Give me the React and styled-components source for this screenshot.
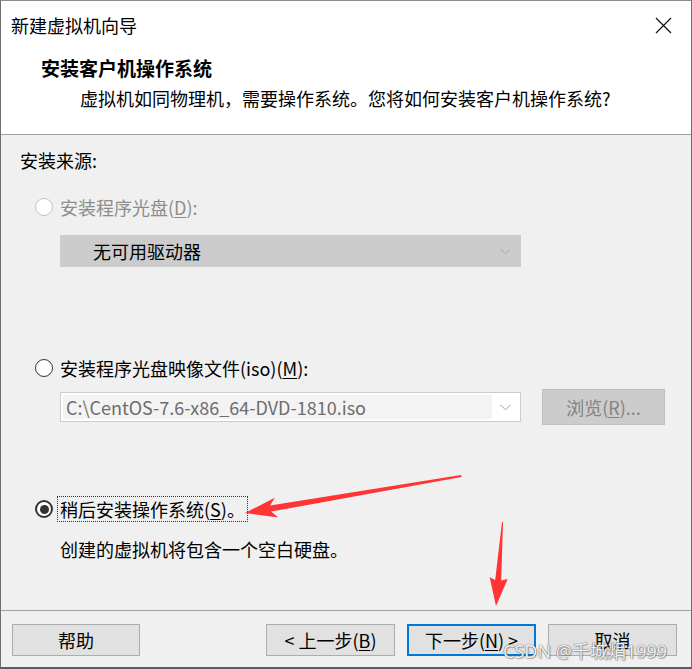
import React from "react";
import styled, { createGlobalStyle } from "styled-components";

const Global = createGlobalStyle`
  html, body { margin: 0; padding: 0; background: #ffffff; }
  * { box-sizing: border-box; }
`;

const FONT = `"Noto Sans CJK SC", "Noto Sans", sans-serif`;

const Window = styled.div`
  position: relative;
  width: 692px;
  height: 669px;
  display: flex;
  flex-direction: column;
  background: #f0f0f0;
  border-top: 1px solid #8c8c8c;
  border-left: 1px solid #707070;
  border-right: 1px solid #707070;
  border-bottom: 2px solid #5c5c5c;
  font-family: ${FONT};
  font-size: 18px;
  line-height: 24px;
  color: #000;
  overflow: hidden;
`;

const Header = styled.div`
  background: #ffffff;
  border-bottom: 1px solid #a0a0a0;
  height: 134px;
  display: flex;
  flex-direction: column;
`;

const TitleBar = styled.div`
  height: 48px;
  display: flex;
  align-items: center;
  justify-content: space-between;
  padding: 0 19px 0 10px;
`;

const Title = styled.span`
  font-size: 18px;
  color: #000;
`;

const CloseIcon = styled.svg`
  width: 17px;
  height: 17px;
  display: block;
`;

const Heading = styled.div`
  margin: 7px 0 0 40px;
  font-size: 19px;
  font-weight: 700;
  line-height: 24px;
`;

const SubHeading = styled.div`
  margin: 6px 0 0 79px;
  line-height: 24px;
`;

const Body = styled.div`
  flex: 1;
  display: flex;
  flex-direction: column;
  padding: 13px 0 0 19px;
`;

const SectionLabel = styled.div`
  line-height: 24px;
`;

const RadioRow = styled.div`
  display: flex;
  align-items: center;
  height: 26px;
  margin-top: ${(p) => p.$top}px;
  margin-left: 15px;
  color: ${(p) => (p.$disabled ? "#8d8d8d" : "#000")};
`;

const RadioCircle = styled.span`
  position: relative;
  width: 18px;
  height: 18px;
  border-radius: 50%;
  border: 1px solid ${(p) => (p.$disabled ? "#c2c2c2" : "#333333")};
  background: #ffffff;
  flex: none;
  display: flex;
  align-items: center;
  justify-content: center;
  ${(p) => (p.$checked ? "border-width: 2px;" : "")}
`;

const RadioDot = styled.span`
  width: 9px;
  height: 9px;
  border-radius: 50%;
  background: #333333;
`;

const RadioLabel = styled.span`
  margin-left: 4px;
  padding: 0 2px;
  line-height: 24px;
  border: 1px ${(p) => (p.$focused ? "dotted #333" : "solid transparent")};
  white-space: nowrap;
`;

const U = styled.span`
  text-decoration: underline;
  text-underline-offset: 2px;
`;

const Dropdown = styled.div`
  margin: 15px 0 0 40px;
  width: 461px;
  height: 32px;
  background: #cccccc;
  border: 1px solid #cccccc;
  display: flex;
  align-items: center;
  justify-content: space-between;
  padding: 0 9px 0 32px;
`;

const Chevron = styled.svg`
  width: 11px;
  height: 7px;
  display: block;
  flex: none;
`;

const FileRow = styled.div`
  margin: 8px 0 0 40px;
  display: flex;
  align-items: center;
  gap: 21px;
  height: 36px;
`;

const Combo = styled.div`
  width: 461px;
  height: 30px;
  background: #ffffff;
  border: 1px solid #cccccc;
  display: flex;
  align-items: center;
  justify-content: space-between;
  padding: 2px 9px 2px 2px;
`;

const ComboField = styled.div`
  width: 429px;
  height: 100%;
  background: #f3f3f3;
  color: #6d6d6d;
  padding-left: 3px;
  display: flex;
  align-items: center;
  white-space: nowrap;
`;

const BrowseButton = styled.div`
  width: 123px;
  height: 36px;
  background: #cccccc;
  border: 1px solid #bfbfbf;
  color: #838383;
  display: flex;
  align-items: center;
  justify-content: center;
`;

const Description = styled.div`
  margin: 15px 0 0 40px;
  line-height: 24px;
`;

const Footer = styled.div`
  border-top: 1px solid #a0a0a0;
  height: 57px;
  display: flex;
  align-items: flex-start;
  padding: 13px 14px 11px 11px;
`;

const ButtonGroup = styled.div`
  margin-left: auto;
  display: flex;
  gap: 12px;
`;

const Button = styled.div`
  width: ${(p) => p.$w || 129}px;
  height: 32px;
  background: #e1e1e1;
  border: ${(p) => (p.$primary ? "2px solid #0078d7" : "1px solid #adadad")};
  display: flex;
  align-items: center;
  justify-content: center;
  white-space: nowrap;
`;

const Overlay = styled.svg`
  position: absolute;
  left: -1px;
  top: -1px;
  width: 692px;
  height: 669px;
  pointer-events: none;
`;

const Watermark = styled.div`
  position: absolute;
  left: 502px;
  top: 638px;
  font-family: "Noto Sans", "Noto Sans CJK SC", sans-serif;
  font-size: 18px;
  line-height: 24px;
  color: rgba(255, 255, 255, 0.92);
  text-shadow: 0 0 1px #6a6a6a, 0 0 1px #6a6a6a, 1px 1px 1px rgba(0, 0, 0, 0.25);
  white-space: nowrap;
  pointer-events: none;
`;

function ChevronDown({ color }) {
  return (
    <Chevron viewBox="0 0 11 7">
      <path d="M0.5 0.8 L5.5 5.8 L10.5 0.8" fill="none" stroke={color} strokeWidth="1" />
    </Chevron>
  );
}

function Radio({ checked, disabled }) {
  return (
    <RadioCircle $checked={checked} $disabled={disabled}>
      {checked && <RadioDot />}
    </RadioCircle>
  );
}

export default function App() {
  return (
    <>
      <Global />
      <Window>
        <Header>
          <TitleBar>
            <Title>新建虚拟机向导</Title>
            <CloseIcon viewBox="0 0 17 17">
              <path d="M1 1 L16 16 M16 1 L1 16" stroke="#111" strokeWidth="1.2" fill="none" />
            </CloseIcon>
          </TitleBar>
          <Heading>安装客户机操作系统</Heading>
          <SubHeading>虚拟机如同物理机，需要操作系统。您将如何安装客户机操作系统?</SubHeading>
        </Header>
        <Body>
          <SectionLabel>安装来源:</SectionLabel>
          <RadioRow $top={22} $disabled>
            <Radio disabled />
            <RadioLabel>
              安装程序光盘(<U>D</U>):
            </RadioLabel>
          </RadioRow>
          <Dropdown>
            <span>无可用驱动器</span>
            <ChevronDown color="#a8a8a8" />
          </Dropdown>
          <RadioRow $top={88}>
            <Radio />
            <RadioLabel>
              安装程序光盘映像文件(iso)(<U>M</U>):
            </RadioLabel>
          </RadioRow>
          <FileRow>
            <Combo>
              <ComboField>C:\CentOS-7.6-x86_64-DVD-1810.iso</ComboField>
              <ChevronDown color="#a0a0a0" />
            </Combo>
            <BrowseButton>
              浏览(<U>R</U>)...
            </BrowseButton>
          </FileRow>
          <RadioRow $top={71}>
            <Radio checked />
            <RadioLabel $focused>
              稍后安装操作系统(<U>S</U>)。
            </RadioLabel>
          </RadioRow>
          <Description>创建的虚拟机将包含一个空白硬盘。</Description>
        </Body>
        <Footer>
          <Button $w={128}>帮助</Button>
          <ButtonGroup>
            <Button>
              &lt; 上一步(<U>B</U>)
            </Button>
            <Button $primary>
              下一步(<U>N</U>) &gt;
            </Button>
            <Button>取消</Button>
          </ButtonGroup>
        </Footer>
        <Overlay viewBox="0 0 692 669">
          <polygon
            points="461,475 270.1,505.6 274.8,497.7 245,513 278.2,517.5 271.1,511.6 461.5,477"
            fill="#ff3434"
          />
          <polygon
            points="503,522 501.2,580.4 507.7,578.9 496,606 489.7,577.3 495.2,579.9 502,522"
            fill="#ff3434"
          />
        </Overlay>
        <Watermark>CSDN @千城焆1999</Watermark>
      </Window>
    </>
  );
}
